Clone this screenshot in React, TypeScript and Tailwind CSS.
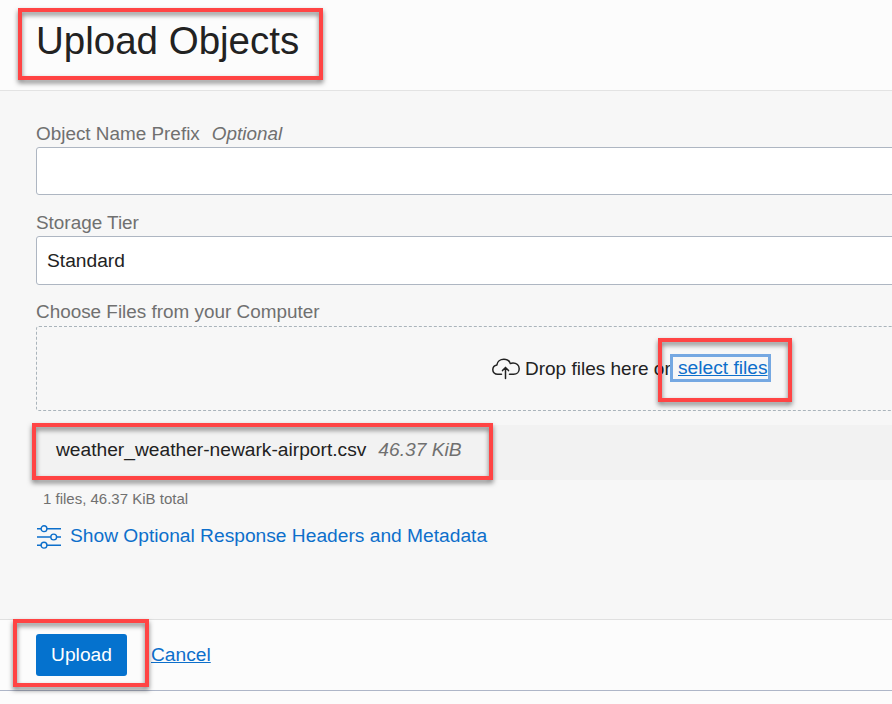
import React from "react";

function Highlight({ className }: { className: string }) {
  return (
    <div
      aria-hidden="true"
      className={`pointer-events-none absolute z-10 border-4 border-[#ff4444] drop-shadow-[0_3px_2.5px_rgba(0,0,0,0.5)] ${className}`}
    />
  );
}

function CloudUploadIcon() {
  return (
    <svg width="28" height="22" viewBox="0 0 28 22" fill="none" stroke="#222" strokeWidth="1.5" strokeLinecap="round" strokeLinejoin="round">
      <path d="M9.500 16.300H5.700C2.800 16.300.8 14.300.8 11.700C.8 9.200 2.500 7.300 4.900 6.900C5.300 3.500 8.200 1.200 11.900 1.200C15 1.200 17.500 2.900 18.300 5.600C19 5.100 20 4.900 21 4.900C24.500 4.900 27.200 7.400 27.200 10.700C27.200 13.900 24.800 16.300 21.600 16.300H17.500" />
      <path d="M13.500 20.500V9.500M10.500 12.600 13.500 9.500l3 3.100" />
    </svg>
  );
}

function SlidersIcon() {
  return (
    <svg className="ml-px mt-px" width="24" height="24" viewBox="0 0 24 24" fill="none" stroke="#0d6fcb" strokeWidth="1.4">
      <path d="M0 3.700h4.200M10 3.700h14M0 12h13.700M19.700 12H24M0 20.200h4.200M10 20.200h14" />
      <circle cx="7" cy="3.700" r="2.900" />
      <circle cx="16.700" cy="12" r="2.900" />
      <circle cx="7" cy="20.200" r="2.900" />
    </svg>
  );
}

export default function App() {
  return (
    <div className="relative h-[704px] w-[892px] overflow-hidden whitespace-nowrap bg-[#fcfcfc] font-['Liberation_Sans',Arial,sans-serif] text-[19.2px] leading-6 text-[#222]">
      <header className="h-[91px] border-b border-[#e3e3e3] pl-9 pt-[17px]">
        <h1 className="text-[38.5px] leading-[48px]">Upload Objects</h1>
      </header>

      <main className="h-[529px] border-b border-[#e0e0e0] bg-[#f7f7f7] pl-9 pt-[31px]">
        <label className="flex h-[25px] gap-3 text-[18.9px] text-[#707070]">
          <span>Object Name Prefix</span>
          <em>Optional</em>
        </label>
        <div className="h-12 w-[1200px] rounded-[3px] border border-[#aeb6c2] bg-white" />

        <label className="mt-4 block h-[25px] text-[18.9px] text-[#707070]">Storage Tier</label>
        <div className="flex h-[49px] w-[1200px] items-center rounded-[3px] border border-[#aeb6c2] bg-white pl-2.5">
          Standard
        </div>

        <label className="mt-[15px] block h-[26px] text-[18.9px] text-[#707070]">Choose Files from your Computer</label>
        <div className="flex h-[85px] w-[1200px] items-center rounded-[3px] border border-dashed border-[#aab4bb] pl-[455px]">
          <CloudUploadIcon />
          <span className="ml-[5px] w-[145px] text-[19px]">Drop files here or</span>
          <a className="mb-0.5 h-7 w-[101px] border-[3px] border-[#75a8e2] pl-[5px] leading-[21px] text-[#0d6fcb] underline decoration-1 underline-offset-1">select files</a>
        </div>

        <div className="mt-3.5 flex h-[55px] w-[1200px] gap-3 bg-[#f2f2f2] pl-5 pt-[13px]">
          <span>weather_weather-newark-airport.csv</span>
          <em className="text-[#707070]">46.37 KiB</em>
        </div>
        <p className="mt-[9px] h-5 pl-[7px] text-[15px] leading-5 text-[#707070]">1 files, 46.37 KiB total</p>
        <div className="mt-[15px] flex h-6 gap-[9px] text-[#0d6fcb]">
          <SlidersIcon />
          <a>Show Optional Response Headers and Metadata</a>
        </div>
      </main>

      <footer className="flex h-[71px] items-center border-b border-[#aeb6c8] pl-9">
        <button className="h-[42px] w-[91px] rounded-[3px] bg-[#0572ce] text-white">Upload</button>
        <a className="ml-6 text-[#0d6fcb] underline decoration-1 underline-offset-1">Cancel</a>
      </footer>

      <Highlight className="left-[18px] top-2 h-[72px] w-[305px]" />
      <Highlight className="left-[658px] top-[338px] h-16 w-[134px]" />
      <Highlight className="left-8 top-[423px] h-[57px] w-[461px]" />
      <Highlight className="left-[13px] top-[619px] h-[68px] w-[136px]" />
    </div>
  );
}
